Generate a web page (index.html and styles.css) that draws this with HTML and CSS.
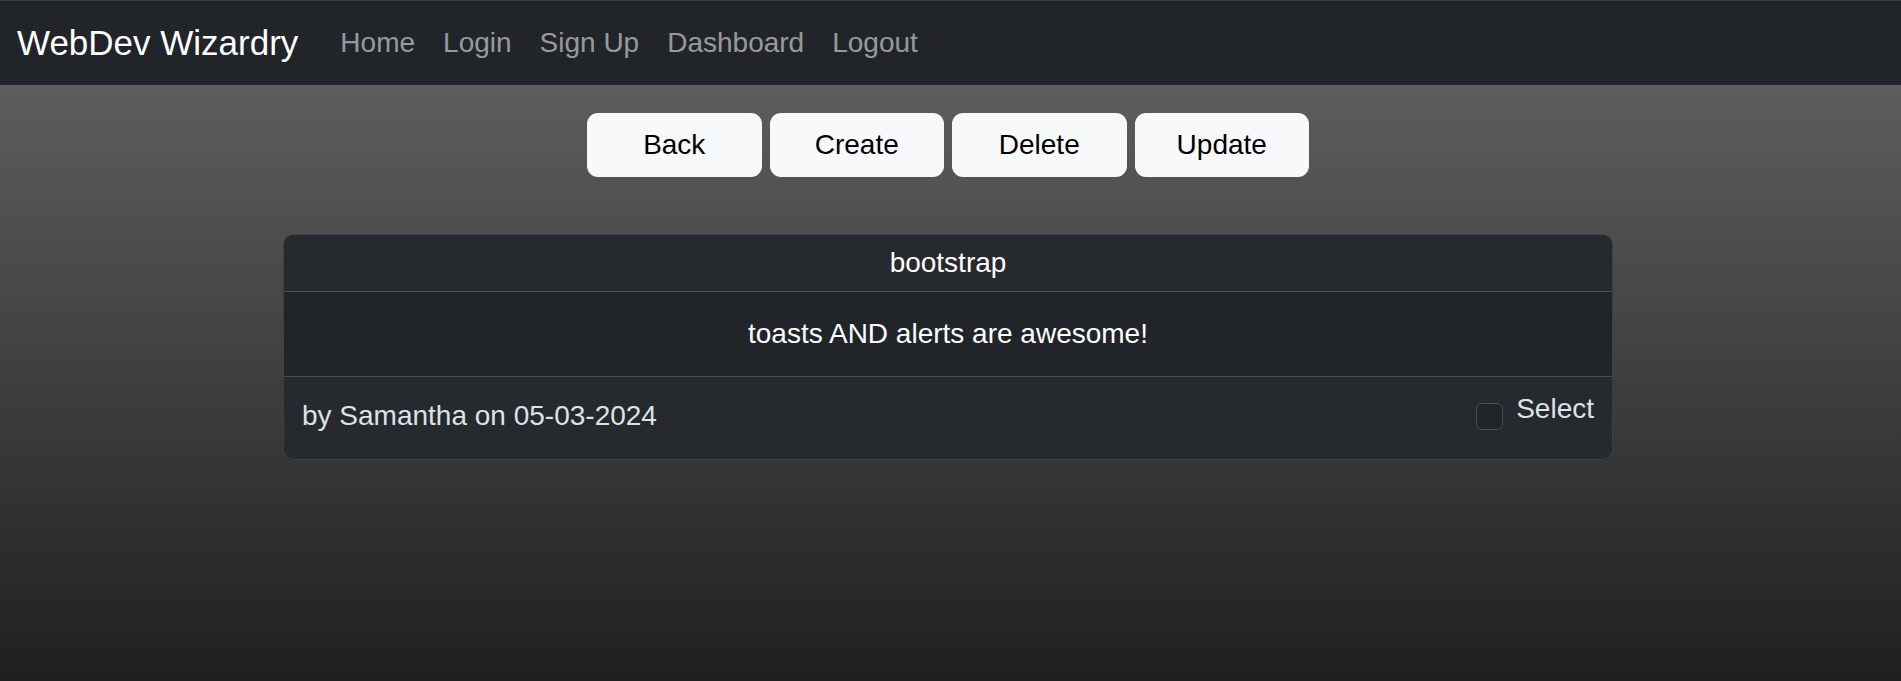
FILE: index.html
```html
<!DOCTYPE html>
<html lang="en">
<head>
<meta charset="utf-8">
<title>WebDev Wizardry</title>
<link rel="stylesheet" href="styles.css">
</head>
<body>
<nav class="navbar">
  <a class="brand" href="#">WebDev Wizardry</a>
  <ul class="nav-links">
    <li><a href="#">Home</a></li>
    <li><a href="#">Login</a></li>
    <li><a href="#">Sign Up</a></li>
    <li><a href="#">Dashboard</a></li>
    <li><a href="#">Logout</a></li>
  </ul>
</nav>
<main class="main">
  <div class="actions">
    <button class="btn">Back</button>
    <button class="btn">Create</button>
    <button class="btn">Delete</button>
    <button class="btn">Update</button>
  </div>
  <section class="card">
    <div class="card-header">bootstrap</div>
    <div class="card-body">toasts AND alerts are awesome!</div>
    <div class="card-footer">
      <span class="byline">by Samantha on 05-03-2024</span>
      <label class="check">
        <span class="check-box"></span>
        <span class="check-label">Select</span>
      </label>
    </div>
  </section>
</main>
</body>
</html>
```
FILE: styles.css
```css
* { box-sizing: border-box; }
html, body {
  margin: 0;
  padding: 0;
}
body {
  min-height: 100vh;
  background: linear-gradient(to bottom, #666666 0%, #1f1f1f 100%);
  font-family: "Liberation Sans", Arial, Helvetica, sans-serif;
  font-size: 28px;
  color: #dee2e6;
}
.navbar {
  height: 85px;
  background: #212529;
  border-top: 1px solid #3a3c3f;
  display: flex;
  align-items: center;
  padding-left: 17px;
}
.brand {
  color: #ffffff;
  text-decoration: none;
  font-size: 35px;
  line-height: 40px;
  margin-right: 28px;
}
.nav-links {
  list-style: none;
  margin: 0;
  padding: 0;
  display: flex;
}
.nav-links a {
  display: block;
  padding: 0 14px;
  color: rgba(255, 255, 255, 0.55);
  text-decoration: none;
  font-size: 28px;
  line-height: 40px;
}
.main {
  display: flex;
  flex-direction: column;
  align-items: center;
  padding-right: 5px;
}
.actions {
  display: flex;
  gap: 8px;
  margin-top: 28px;
}
.btn {
  width: 174.5px;
  height: 64px;
  border: none;
  border-radius: 11px;
  background: #f8f9fa;
  color: #000000;
  font-family: inherit;
  font-size: 28px;
}
.card {
  width: 1330px;
  margin-top: 57px;
  border: 1px solid #3d4044;
  border-radius: 11px;
  overflow: hidden;
  background: #212529;
}
.card-header {
  height: 57px;
  border-bottom: 1px solid #4a4d51;
  background: #26292d;
  color: #ffffff;
  display: flex;
  align-items: center;
  justify-content: center;
  line-height: 34px;
}
.card-body {
  height: 85px;
  border-bottom: 1px solid #4a4d51;
  background: #212529;
  color: #ffffff;
  display: flex;
  align-items: center;
  justify-content: center;
  line-height: 34px;
}
.card-footer {
  height: 82px;
  background: #26292d;
  display: flex;
  justify-content: space-between;
  align-items: flex-start;
  padding: 0 18px 0 18px;
}
.byline {
  padding-top: 22px;
  line-height: 34px;
}
.check {
  display: flex;
  align-items: flex-start;
  padding-top: 15px;
}
.check-box {
  width: 27px;
  height: 27px;
  margin-top: 11px;
  margin-right: 13px;
  border: 1px solid #4a4d51;
  border-radius: 6px;
  background: #212529;
}
.check-label {
  line-height: 34px;
}
```
